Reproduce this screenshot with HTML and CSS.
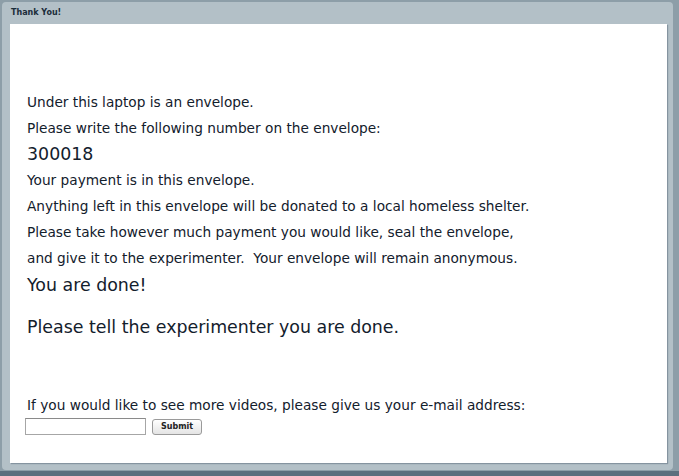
FILE: index.html
```html
<html>
  <head>
    <meta charset="utf-8">
    <title>Thank You!</title>
    <link rel="stylesheet" href="styles.css">
  </head>
  <body>
    <div class="janela">
      <div class="janela-titulo">Thank You!</div>
      <div class="janela-conteudo">
        <p class="linha">Under this laptop is an envelope.</p>
        <p class="linha">Please write the following number on the envelope:</p>
        <p class="linha grande numero">300018</p>
        <p class="linha">Your payment is in this envelope.</p>
        <p class="linha">Anything left in this envelope will be donated to a local homeless shelter.</p>
        <p class="linha">Please take however much payment you would like, seal the envelope,</p>
        <p class="linha">and give it to the experimenter.&nbsp; Your envelope will remain anonymous.</p>
        <p class="linha grande">You are done!</p>
        <p class="linha grande fim">Please tell the experimenter you are done.</p>

        <form class="email">
          <p class="linha">If you would like to see more videos, please give us your e-mail address:</p>
          <div class="email-campos">
            <input type="text" class="email-texto">
            <button type="button" class="email-botao">Submit</button>
          </div>
        </form>
      </div>
    </div>
  </body>
</html>
```

FILE: styles.css
```css
* {
  font-family: "DejaVu Sans", Verdana, sans-serif;
  box-sizing: border-box;
}

html, body {
  margin: 0;
  padding: 0;
  height: 100%;
}

body {
  background-color: #8d9ea8;
  padding: 2px 6px 6px 2px;
  background-image: linear-gradient(to top, #5c6f7e 0, #5c6f7e 5px, transparent 5px);
}

.janela {
  background-color: #b3c0c7;
  border-radius: 4px;
  height: 468px;
  padding: 0 6px 7px 8px;
  display: flex;
  flex-direction: column;
}

.janela-titulo {
  font-size: 8px;
  font-weight: bold;
  color: #1b2d3b;
  height: 22px;
  line-height: 22px;
  padding-left: 1px;
}

.janela-conteudo {
  flex-grow: 1;
  background-color: #fff;
  box-shadow: 1px 1px 1px #8594a0;
  padding: 65px 0 0 17px;
  color: #13202c;
}

.linha {
  margin: 0;
  font-size: 13.7px;
  line-height: 26px;
}

.grande {
  font-size: 17.4px;
  line-height: 28px;
}

.numero {
  line-height: 26px;
}

.fim {
  margin-top: 14px;
}

.email {
  margin: 51px 0 0;
}

.email-campos {
  display: flex;
  align-items: center;
  gap: 6px;
  margin-left: -2px;
}

.email-texto {
  width: 121px;
  height: 17px;
  border: 1px solid #a6a6a6;
  border-top-color: #8a8a8a;
  padding: 0;
}

.email-botao {
  font-size: 8px;
  font-weight: bold;
  color: #222;
  height: 16px;
  width: 50px;
  padding: 0;
  border: 1px solid #9a9a9a;
  border-radius: 3px;
  background: linear-gradient(#ffffff, #e4e4e4);
}
```
